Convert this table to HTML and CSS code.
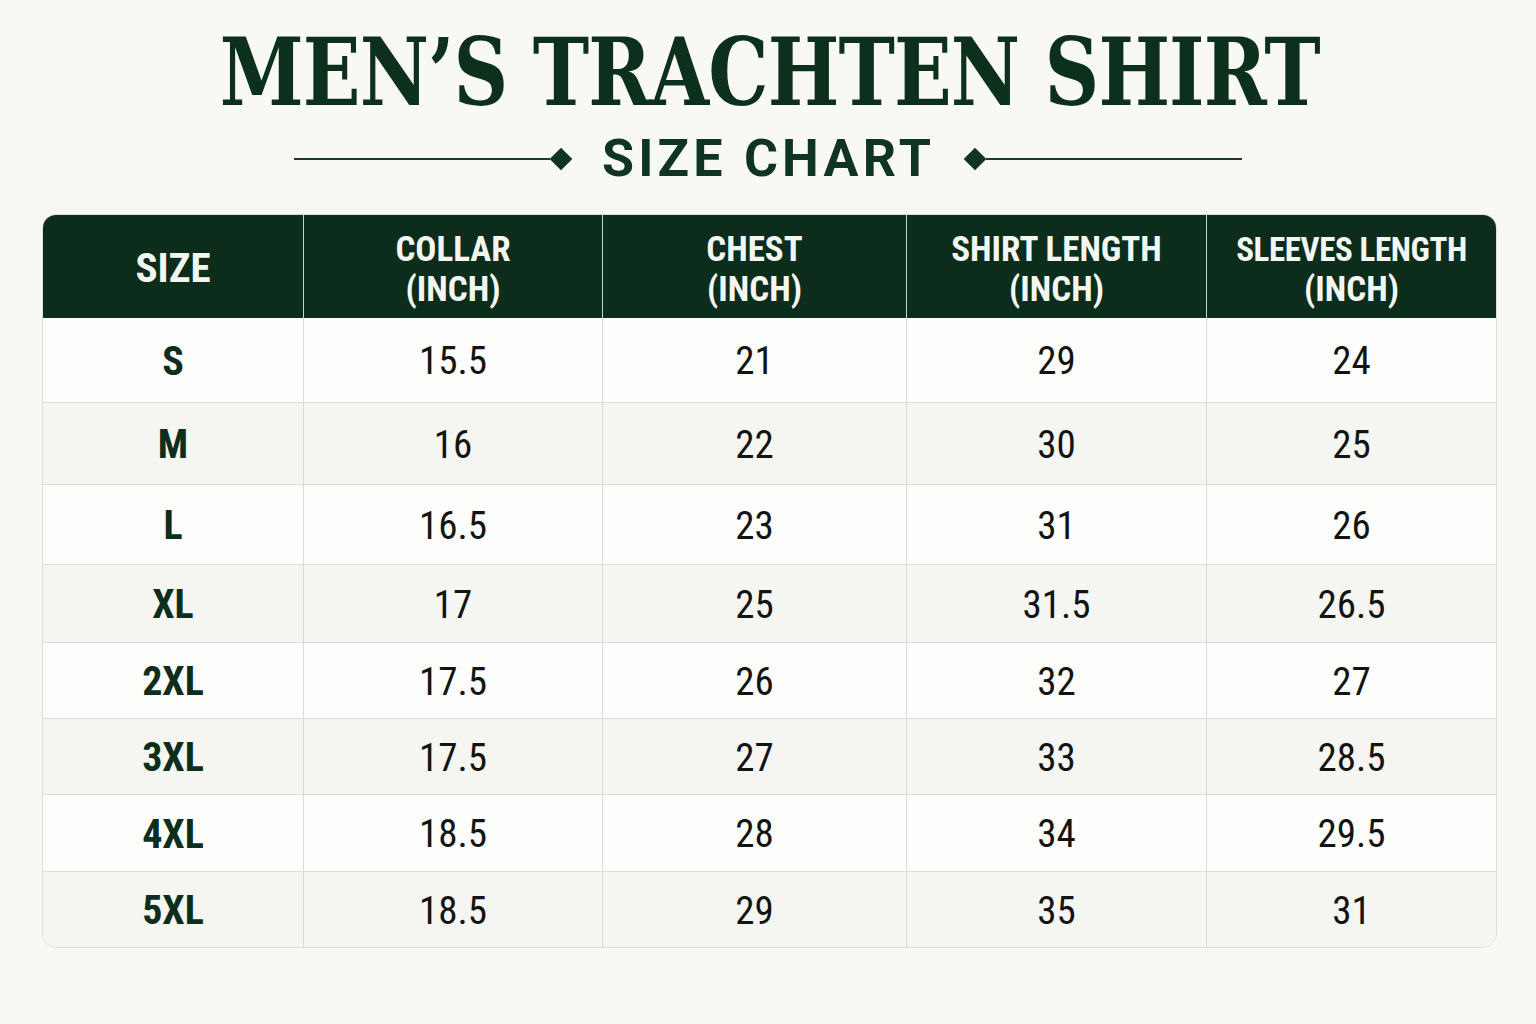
FILE: index.html
```html
<!DOCTYPE html>
<html lang="en">
<head>
<meta charset="utf-8">
<title>Men's Trachten Shirt Size Chart</title>
<link rel="stylesheet" href="styles.css">
</head>
<body>
<main class="page">
  <header class="heading">
    <h1 class="title">MEN’S TRACHTEN SHIRT</h1>
    <div class="subtitle-row">
      <span class="rule"></span>
      <span class="diamond"></span>
      <h2 class="subtitle">SIZE CHART</h2>
      <span class="diamond"></span>
      <span class="rule"></span>
    </div>
  </header>

  <section class="chart">
    <div class="row head">
      <div class="cell hsize">SIZE</div>
      <div class="cell">COLLAR<br>(INCH)</div>
      <div class="cell">CHEST<br>(INCH)</div>
      <div class="cell">SHIRT LENGTH<br>(INCH)</div>
      <div class="cell"><div><span class="tight">SLEEVES LENGTH</span><br>(INCH)</div></div>
    </div>
    <div class="row body">
      <div class="cell size">S</div><div class="cell">15.5</div><div class="cell">21</div><div class="cell">29</div><div class="cell">24</div>
    </div>
    <div class="row body">
      <div class="cell size">M</div><div class="cell">16</div><div class="cell">22</div><div class="cell">30</div><div class="cell">25</div>
    </div>
    <div class="row body">
      <div class="cell size">L</div><div class="cell">16.5</div><div class="cell">23</div><div class="cell">31</div><div class="cell">26</div>
    </div>
    <div class="row body">
      <div class="cell size">XL</div><div class="cell">17</div><div class="cell">25</div><div class="cell">31.5</div><div class="cell">26.5</div>
    </div>
    <div class="row body">
      <div class="cell size">2XL</div><div class="cell">17.5</div><div class="cell">26</div><div class="cell">32</div><div class="cell">27</div>
    </div>
    <div class="row body">
      <div class="cell size">3XL</div><div class="cell">17.5</div><div class="cell">27</div><div class="cell">33</div><div class="cell">28.5</div>
    </div>
    <div class="row body">
      <div class="cell size">4XL</div><div class="cell">18.5</div><div class="cell">28</div><div class="cell">34</div><div class="cell">29.5</div>
    </div>
    <div class="row body">
      <div class="cell size">5XL</div><div class="cell">18.5</div><div class="cell">29</div><div class="cell">35</div><div class="cell">31</div>
    </div>
  </section>
</main>
</body>
</html>
```
FILE: styles.css
```css
html, body {
  margin: 0;
  padding: 0;
}
body {
  background: #f8f8f5;
  width: 1536px;
  height: 1024px;
  overflow: hidden;
}
.page {
  display: flex;
  flex-direction: column;
  align-items: stretch;
}
.heading {
  display: flex;
  flex-direction: column;
  align-items: center;
  padding-top: 17px;
}
.title {
  margin: 0 0 0 4px;
  font-family: "DejaVu Serif Condensed", "DejaVu Serif", serif;
  font-stretch: condensed;
  font-weight: 700;
  font-size: 94px;
  line-height: 110px;
  color: #0d301d;
  letter-spacing: -1px;
  white-space: nowrap;
  transform: scaleX(0.896);
}
.subtitle-row {
  display: flex;
  align-items: center;
  height: 56px;
  margin-top: 4px;
}
.rule {
  display: block;
  width: 256px;
  height: 2px;
  background: #1c3a2a;
}
.diamond {
  display: block;
  width: 16px;
  height: 16px;
  background: #0f3421;
  transform: rotate(45deg);
  margin: 0 3px;
}
.subtitle {
  margin: 0 29px 0 30px;
  font-family: "Roboto", "Noto Sans", sans-serif;
  font-weight: 700;
  font-size: 52px;
  line-height: 56px;
  letter-spacing: 4.2px;
  color: #0f3421;
  white-space: nowrap;
}
.chart {
  margin: 27px 39px 0 42px;
  border: 1px solid #dcdcd8;
  border-radius: 14px;
  overflow: hidden;
  background: #fdfdfb;
}
.row {
  display: grid;
  grid-template-columns: 260px 299px 304px 300px 1fr;
}
.cell {
  display: flex;
  align-items: center;
  justify-content: center;
  text-align: center;
  border-left: 1px solid #d9d9d6;
}
.cell:first-child { border-left: none; }
.head {
  background: #0c2d1b;
  height: 104px;
  margin: -1px -1px 0 -1px;
  padding: 0 1px;
}
.head .cell {
  font-family: "Roboto", "DejaVu Sans", sans-serif;
  font-stretch: 81%;
  font-weight: 700;
  font-size: 35px;
  line-height: 40px;
  color: #f4f6f2;
  border-left-color: #c9d1cc;
  padding-top: 7px;
}
.head .tight {
  font-stretch: 75%;
  font-size: 33px;
  letter-spacing: -0.4px;
}
.head .hsize {
  font-size: 41px;
  font-stretch: 84%;
  padding-top: 3px;
}
.body {
  border-top: 1px solid #dcdcd8;
}
.body:nth-child(odd) { background: #f5f5f1; }
.body:nth-child(even) { background: #fdfdfb; }
.body:nth-child(2) { border-top: none; height: 84px; }
.body:nth-child(3) { height: 81px; }
.body:nth-child(4) { height: 79px; }
.body:nth-child(5) { height: 77px; }
.body:nth-child(6) { height: 75px; }
.body:nth-child(7) { height: 75px; }
.body:nth-child(8) { height: 76px; }
.body:nth-child(9) { height: 75px; }
.body .cell {
  font-family: "Roboto", "DejaVu Sans", sans-serif;
  font-stretch: 85%;
  font-weight: 400;
  font-size: 39px;
  color: #121412;
  padding-top: 2px;
}
.body .size {
  font-weight: 700;
  color: #0d2e1c;
  font-size: 40px;
}
```
